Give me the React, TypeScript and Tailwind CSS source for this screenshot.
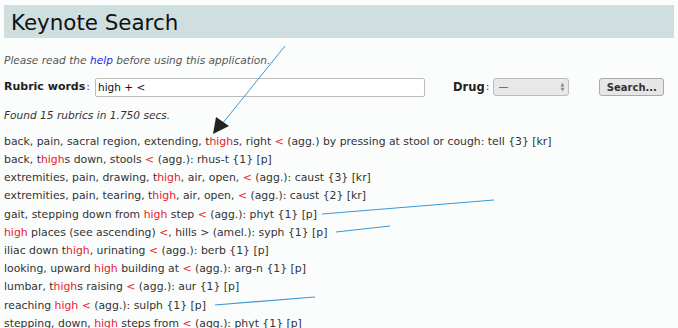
import React from "react";

const rows: string[][] = [
  ["back, pain, sacral region, extending, t", "high", "s, right ", "<", " (agg.) by pressing at stool or cough: tell {3} [kr]"],
  ["back, t", "high", "s down, stools ", "<", " (agg.): rhus-t {1} [p]"],
  ["extremities, pain, drawing, t", "high", ", air, open, ", "<", " (agg.): caust {3} [kr]"],
  ["extremities, pain, tearing, t", "high", ", air, open, ", "<", " (agg.): caust {2} [kr]"],
  ["gait, stepping down from ", "high", " step ", "<", " (agg.): phyt {1} [p]"],
  ["", "high", " places (see ascending) ", "<", ", hills > (amel.): syph {1} [p]"],
  ["iliac down t", "high", ", urinating ", "<", " (agg.): berb {1} [p]"],
  ["looking, upward ", "high", " building at ", "<", " (agg.): arg-n {1} [p]"],
  ["lumbar, t", "high", "s raising ", "<", " (agg.): aur {1} [p]"],
  ["reaching ", "high", " ", "<", " (agg.): sulph {1} [p]"],
  ["stepping, down, ", "high", " steps from ", "<", " (agg.): phyt {1} [p]"],
];

export default function App() {
  return (
    <div className="relative h-[328px] w-[678px] overflow-hidden bg-[#fbfdfd] px-1 pt-[5px] font-['DejaVu_Sans',sans-serif] text-[#333]">
      <div className="flex h-[33px] items-center bg-[#cfdfe0] px-[7px] pt-[2px]">
        <h1 className="text-[21.4px] leading-none text-[#111]">Keynote Search</h1>
      </div>

      <p className="mt-[15px] text-[10.6px] italic text-[#555]">
        Please read the <span className="text-[#2222ee]">help</span> before using this application.
      </p>

      <div className="mt-[9px] flex items-center text-[11px]">
        <span className="font-bold text-[#222]">Rubric words</span>
        <span className="ml-px">:</span>
        <div className="ml-[5px] flex h-[19px] w-[330px] items-center rounded-[2px] border border-[#bbb] bg-white px-[2px] text-[10.5px] text-[#111]">
          high + &lt;
        </div>
        <span className="ml-[28px] text-[11.5px] font-bold text-[#222]">Drug</span>
        <span className="ml-px">:</span>
        <div className="ml-[4px] flex h-[18px] w-[76px] items-center justify-between rounded-[3px] border border-[#bbb] bg-[#e8e8e8] px-[4px] text-[10px] text-[#555]">
          <span className="leading-none">—</span>
          <span className="flex flex-col text-[5px] leading-[5px] text-[#888]">
            <span>▲</span>
            <span>▼</span>
          </span>
        </div>
        <div className="ml-[30px] flex h-[18px] w-[65px] items-center justify-center rounded-[3px] border border-[#aaa] bg-[#e6e6e6] text-[10px] font-bold text-[#333]">
          Search...
        </div>
      </div>

      <p className="mt-[11px] text-[10.6px] italic text-[#333]">Found 15 rubrics in 1.750 secs.</p>

      <div className="mt-[9px] flex flex-col text-[10.85px] leading-[18.2px]">
        {rows.map((r, i) => (
          <div key={i} className="whitespace-nowrap">
            {r[0]}
            <span className="text-[#e8202a]">{r[1]}</span>
            {r[2]}
            <span className="text-[#e8202a]">{r[3]}</span>
            {r[4]}
          </div>
        ))}
      </div>

      <svg className="pointer-events-none absolute inset-0" width="678" height="328">
        <line x1="285" y1="46" x2="222" y2="124" stroke="#3a98d8" strokeWidth="1" />
        <polygon points="213,134 216,117 229,126" fill="#222" />
        <line x1="322" y1="214" x2="494" y2="200" stroke="#3a98d8" strokeWidth="1.2" />
        <line x1="336" y1="232" x2="390" y2="226" stroke="#3a98d8" strokeWidth="1.2" />
        <line x1="215" y1="305" x2="315" y2="297" stroke="#3a98d8" strokeWidth="1.2" />
      </svg>
    </div>
  );
}
